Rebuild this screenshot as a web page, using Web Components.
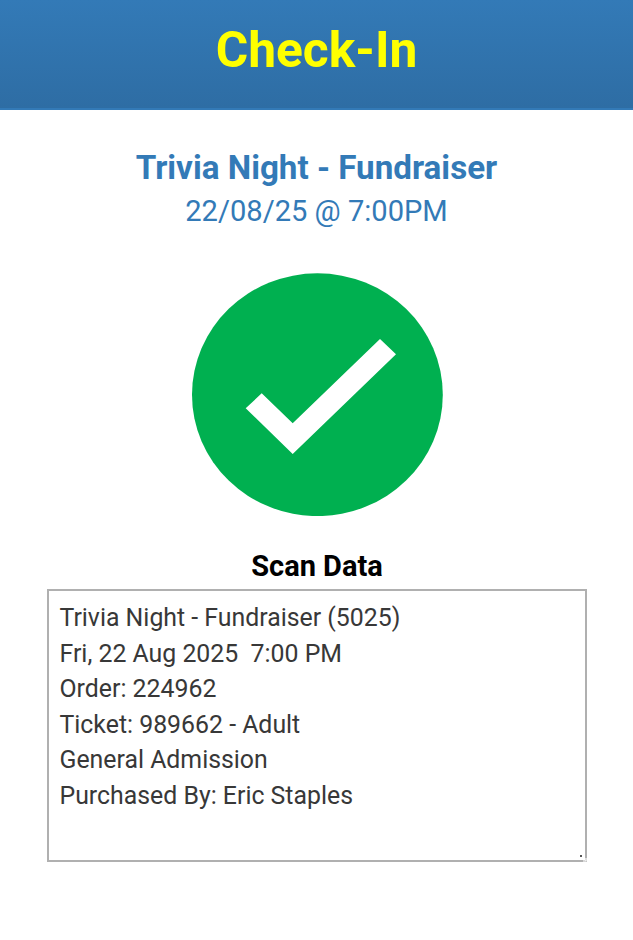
<!DOCTYPE html>
<html>
<head>
<meta charset="utf-8">
<title>Check-In</title>
<style>
    html, body { margin: 0; padding: 0; background: #fff; font-family: Roboto, "Liberation Sans", sans-serif; }
</style>
</head>
<body>
<checkin-header>Check-In</checkin-header>
<event-info name="Trivia Night - Fundraiser" when="22/08/25 @ 7:00PM"></event-info>
<status-icon></status-icon>
<scan-data>Trivia Night - Fundraiser (5025)
Fri, 22 Aug 2025  7:00 PM
Order: 224962
Ticket: 989662 - Adult
General Admission
Purchased By: Eric Staples</scan-data>

<script>
class CheckinHeader extends HTMLElement
{
    constructor()
    {
        super();
        this.attachShadow({mode: 'open'}).innerHTML = `
            <style>
                :host
                {
                    display: flex;
                    align-items: center;
                    justify-content: center;
                    box-sizing: border-box;
                    height: 110px;
                    padding-bottom: 9px;
                    color: #ff0;
                    font-size: 49.7px;
                    font-weight: 700;
                    background: linear-gradient(#337ab7, #2e6da4);
                    border-bottom: 2px solid #337ab7;
                }
            </style>
            <slot></slot>`;
    }
}
customElements.define("checkin-header", CheckinHeader);

class EventInfo extends HTMLElement
{
    constructor()
    {
        super();
        this.attachShadow({mode: 'open'}).innerHTML = `
            <style>
                :host
                {
                    display: block;
                    padding-top: 40px;
                    color: #337ab7;
                    text-align: center;
                }
                div { line-height: 36px; }
                .name { font-size: 33.2px; font-weight: 700; margin-bottom: 7px; }
                .when { font-size: 29.1px; }
            </style>
            <div class="name"></div>
            <div class="when"></div>`;
        this.shadowRoot.querySelector(".name").textContent = this.getAttribute("name");
        this.shadowRoot.querySelector(".when").textContent = this.getAttribute("when");
    }
}
customElements.define("event-info", EventInfo);

class StatusIcon extends HTMLElement
{
    constructor()
    {
        super();
        this.attachShadow({mode: 'open'}).innerHTML = `
            <style>
                :host
                {
                    display: flex;
                    justify-content: center;
                    padding-top: 44px;
                    padding-left: 1px;
                }
                svg { display: block; }
            </style>
            <svg width="251" height="243" viewBox="192 273 251 243">
                <ellipse cx="317.4" cy="394.7" rx="125.4" ry="121.4" fill="#00b050"/>
                <polygon fill="#fff" points="380,339 396,354.3 292.7,454 245.7,408.3 261.7,393.3 292.7,423.3"/>
            </svg>`;
    }
}
customElements.define("status-icon", StatusIcon);

class ScanData extends HTMLElement
{
    constructor()
    {
        super();
        this.attachShadow({mode: 'open'}).innerHTML = `
            <style>
                :host
                {
                    display: block;
                    padding: 33px 46px 0 47px;
                }
                h2
                {
                    margin: 0 0 6px;
                    color: #000;
                    font-size: 29px;
                    line-height: 34px;
                    font-weight: 700;
                    text-align: center;
                }
                .box
                {
                    position: relative;
                    box-sizing: border-box;
                    height: 273px;
                    padding: 9px 10.5px;
                    border: 2px solid #b0b0b0;
                    color: #383838;
                    font-size: 24.85px;
                    line-height: 35.5px;
                    white-space: pre-wrap;
                }
                svg { position: absolute; right: -2px; bottom: -2px; }
            </style>
            <h2>Scan Data</h2>
            <div class="box"><slot></slot><svg width="8" height="8" viewBox="0 0 8 8">
                <rect x="1" y="1" width="2" height="2" fill="#555"/>
                <path d="M3 3l2 2M7 4v3H4" fill="none" stroke="#fff" stroke-width="1.2"/>
            </svg></div>`;
    }
}
customElements.define("scan-data", ScanData);
</script>
</body>
</html>
